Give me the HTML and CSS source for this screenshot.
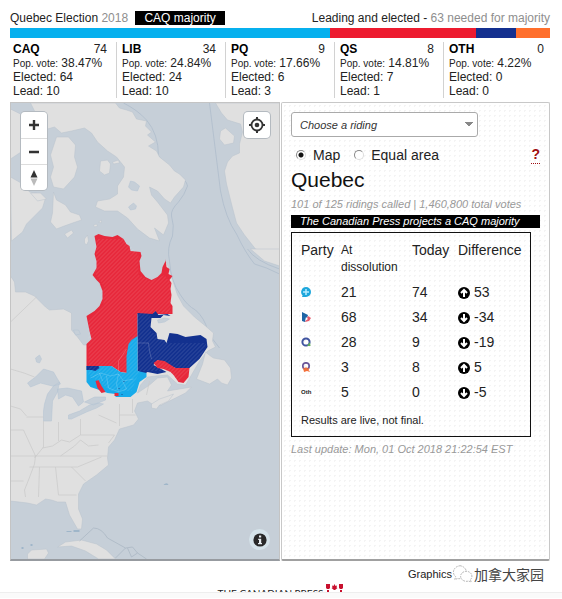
FILE: index.html
```html
<!DOCTYPE html>
<html lang="en">
<head>
<meta charset="utf-8">
<title>Quebec Election 2018</title>
<link rel="stylesheet" href="styles.css">
</head>
<body>
<div class="page">
  <header class="top">
    <div>Quebec Election <span class="muted">2018</span> <span class="tag">CAQ majority</span></div>
    <div class="leading">Leading and elected - <span class="muted">63 needed for majority</span></div>
  </header>
  <div class="bar"><span class="seg caq"></span><span class="seg lib"></span><span class="seg pq"></span><span class="seg qs"></span></div>
  <section class="parties">
    <div class="party"><div class="head"><b>CAQ</b><span>74</span></div><div><small>Pop. vote:</small> 38.47%</div><div>Elected: 64</div><div>Lead: 10</div></div>
    <div class="party"><div class="head"><b>LIB</b><span>34</span></div><div><small>Pop. vote:</small> 24.84%</div><div>Elected: 24</div><div>Lead: 10</div></div>
    <div class="party"><div class="head"><b>PQ</b><span>9</span></div><div><small>Pop. vote:</small> 17.66%</div><div>Elected: 6</div><div>Lead: 3</div></div>
    <div class="party"><div class="head"><b>QS</b><span>8</span></div><div><small>Pop. vote:</small> 14.81%</div><div>Elected: 7</div><div>Lead: 1</div></div>
    <div class="party"><div class="head"><b>OTH</b><span>0</span></div><div><small>Pop. vote:</small> 4.22%</div><div>Elected: 0</div><div>Lead: 0</div></div>
  </section>
  <main class="panels">
    <div class="map">
      <svg class="mapart" viewBox="11 104 269 456" preserveAspectRatio="xMidYMid slice" aria-hidden="true">
        <defs>
          <pattern id="hatch" width="4" height="4" patternUnits="userSpaceOnUse"><path d="M0 4L4 0" stroke="#fff" stroke-opacity=".2" stroke-width=".7"/></pattern>
        </defs>
        <path fill="#c6cfd8" d="M11 104h269v457H11z"/>
        <g fill="none" stroke="#aebccb" stroke-width=".8">
          <path d="M124 104q14 7 23 17 12 14 12 36 8 10 19 18 9 6 10 12-3 9-9 16-8 8-7 14 3 9 1 20-6 12-3 25 1 20 11 34 7 11 15 15 9 8 12 20 5 10 12 18"/>
          <path d="M210 104l11 88q5 27 16 43 9 19 18 30l12 4 13 6"/>
          <path d="M248 250q8 12 32 20"/>
        </g>
        <g fill="#e0e0e0" stroke="#b9c3cc" stroke-width=".5">
          <path d="M31 104L116 104 120 109 127 111 133 113 137 120 147 122 146 127 152 133 148 136 156 143 149 147 157 152 160 158 170 166 175 172 180 175 186 181 184 188 175 198 171 204 165 200 158 192 150 188 152 196 158 203 168 216 169 224 164 236 155 229 160 242 150 239 138 230 128 219 118 212 105 212 96 208 98 202 110 200 118 195 118 187 124 178 125 168 117 158 108 152 98 143 92 134 85 129 72 132 62 134 55 128 48 130 40 122z"/>
          <path d="M11 110L21 115 30 130 26 150 11 160z"/>
          <path d="M57 138h12l7 8-1 12 3 10-3 10-11 12-10-2-3-10 3-10-3-12z"/>
          <path d="M101 162l7-1 3 4-1 9-5 2-5-4z"/>
          <path d="M113 163l6-2 1 3-6 1z"/>
          <path d="M11 178l14 8 5 7 11 2 5 4-3 10-8 8-8 8-4 8-11 9z"/>
          <path d="M31 194h10l6 6-9 2z"/>
          <path d="M54 193l3 8 9 5 5 7 9 3 2 5-9 3-11 4-5 2-6-7 2-9z"/>
          <path d="M65 235l7-4 2 3-6 5zM85 240l3-4 1 6-2 4-2-2zM94 226l3-1 1 2-3 1zM99 223l3-2v3z"/>
          <path d="M216 104H280V261L268 254 256 250 245 236 237 224 232 205 227 185 225 172 228 163 233 157 240 154 240 145 243 133 241 125 228 121 222 114z"/>
          <path d="M221 132l5-3 9 8-1 7-9 2-5-6zM251 250h29v17l-15-5z"/>
          <path d="M11 277L15 283 16 293 26 293 35 297 46 308 50 311 64 310 72 314 72 331 78 338 84 346 90 346 93 335 88 318 100 310 104 295 97 278 100 240 138 256 141 275 152 282 162 274 167 263 171 275 175 287 178 296 184 307 195 318 206 327 214 334 213 342 216 348 208 352 200 362 192 376 186 386 178 385 168 376 156 377 148 378 141 386 138 394 150 386 158 379 168 378 172 386 168 392 180 390 192 388 186 394 176 399 162 406 154 406 148 402 138 404 135 412 139 420 134 426 120 430 115 441 109 448 108 459 109 466 97 476 84 485 79 495 79 510 83 520 82 530 78 530 70 516 66 503 58 503 52 501 46 500 37 506 28 504 11 502z"/>
          <path d="M197 380L203 365 206 353 211 357 214 359 225 361 231 369 232 379 228 386 222 384 218 380 210 385z"/>
          <path d="M152 405l8-5 9-3 5-2-5 7-9 4-3 4-5-1z"/>
          <path d="M28 555l4-4 15-1 2 4-4 6H28zM58 548l8-5 16-2 15 4 10 6 9 9H99l-13-8-14-5z"/>
        </g>
        <g fill="#c6cfd8" stroke="#b3c3d2" stroke-width=".5">
          <path d="M36 359l4-3 2 4-2 4-3-1zM28 384l8-6 8-8 10 3 4 7 3 5-8 2-12-3-10 4zM45 405l3-10 6-8 6-4-2 10-5 9-1 20-8 0 0-10zM58 390l10-1 14 3 2 11-5 4-6-9-7-2-7 4zM69 416l11-4 10-6 9-2 5 1-7 4-10 4-15 7-3 0zM85 403l10-5 11 0 0 3-12 5z"/>
          <path d="M131 182l4 1 5 4-2 5-6-1-3-3zM129 208l5-4 3 3-1 3-5 1zM74 331l5 0 2 4-5 1z"/>
          <path d="M158 321l7-2 5 1-5 3-6 1z"/>
        </g>
        <g fill="none" stroke="#c8c8c8" stroke-width=".7">
          <path d="M11 323l26-25M11 457h25M11 431h13l12 26-1 8-6 16-4 10 1 7M11 482h13M11 407l10 3 6 7M27 418h17M44 422v26l-9 11M59 423v19M81 420v16l-11 7-8-2-9 6-10 2M81 436h34l-6 8M61 457l14-10 6-6 8 6 10-1M35 457h73M30 468h48l24-10M40 468l-1 30M56 468l3 28h18M72 468l14 14M120 405v22M133 400v14M120 416h16M99 416l18 8M11 370q15 4 24 8M150 382l-3 14"/>
          <path d="M80 542l14-13q8 0 14 10l18 10 7-1 5 6-6 4-4-9M126 549l-10 10M138 554l9 6" stroke="#a8b5c2"/>
        </g>
        <g fill="#9fb6c9"><path d="M22 548h2v2h-2zM31 545h2v2h-2zM67 532h5v1h-5zM74 531h6v2h-6zM165 485q3-2 4 1h-5z"/></g>
        <path fill="#c6cfd8" d="M140 252L141 273 145 278 152 281 158 279 163 271 166 259 160 245 145 240z"/>
        <g>
          <path fill="#e7293c" d="M95 237L99 235 105 237 113 238 118 236 124 240 127 245 130 247 131 252 141 253 142 257 140 262 141 272 146 278 152 281 158 278 162 274 163 268 166 262 166 260 167 268 170 270 169 275 173 277 170 281 172 284 171 290 172 296 171 304 173 307 173 315H138V338L128 357 128 374 121 373 112 367H87V345L92 340 90 332 87 317 95 312 100 307 103 300 103 292 100 284 97 281 93 276 97 269 97 262 95 255 97 248z"/>
          <path fill="#13318f" d="M138 314L153 315 156 312 159 316 168 315 171 317 164 316 161 319 152 319 151 328 157 334 158 340 165 341 167 344 170 334 178 335 186 338 201 336 207 340 208 348 200 360 190 369 176 369 168 366 158 361 154 366 160 369 167 373 158 375 148 373 145 375 138 372z"/>
          <path fill="#18abea" d="M138 337V372L147 374 147 378 140 383 137 393 131 398H116V395L108 394 97 390 91 388 87 383V367H112L121 373 127 374 127 357 129 345 132 341z"/>
          <path fill="#13318f" d="M87 367L99 367 100 369 96 372 92 371 87 371z"/>
          <path fill="#e7293c" d="M96 382L99 381 102 387 106 393 102 394 98 389zM154 364L158 361 165 362 176 369H190L189 378 184 384 179 383 174 376 171 373 164 370 158 369zM115 394h4v3h-4z"/>
          <path fill="none" stroke="#fff" stroke-opacity=".3" stroke-width=".6" d="M127 350l-8 12v10M138 344h11l1 8 2 8M91 379l10-5 10 3 8-2 5 7 10-2M107 377l2 12 10 4 8-3-4-8M119 375l-2 10 2 8M100 374l3 8"/>
          <path fill="#1b4f96" d="M119 389h1v1h-1zM122 395h1v1h-1zM124 382h1v1h-1z"/>
        </g>
        <path fill="url(#hatch)" d="M97 240h28l14 16v20l12 6 14-6 6 8v30h-20v18l18 12h38l-8 20-12 10-8 8-16-10h-23l-8 20h-20l-23-16V320l15-13v-20l-8-12z"/>
      </svg>
      <div class="zoomer">
        <button aria-label="Zoom in"><svg viewBox="0 0 12 12"><path d="M6 1v10M1 6h10" stroke="#333" stroke-width="2.4"/></svg></button>
        <button aria-label="Zoom out"><svg viewBox="0 0 12 12"><path d="M1 6h10" stroke="#333" stroke-width="2.4"/></svg></button>
        <button aria-label="Reset north"><svg class="compass" viewBox="0 0 8 16"><path d="M4 0l3.500 7.500h-7z" fill="#333"/><path d="M4 16l3.500-7.500h-7z" fill="#bbb"/></svg></button>
      </div>
      <button class="locate" aria-label="Find my location"><svg viewBox="0 0 16 16"><circle cx="8" cy="8" r="5.500" fill="none" stroke="#333" stroke-width="1.800"/><circle cx="8" cy="8" r="2.300" fill="#333"/><path d="M8 0v3M8 13v3M0 8h3M13 8h3" stroke="#333" stroke-width="2"/></svg></button>
      <button class="info" aria-label="Map information"><svg viewBox="0 0 14 14"><circle cx="7" cy="7" r="6.600" fill="#292929"/><path d="M6 2.500h2.200v2H6zM5.200 5.800h3v4.200h.8v1.300H5V10h1V7h-.8z" fill="#e8eef2"/></svg></button>
    </div>
    <aside class="results">
      <select aria-label="Riding"><option>Choose a riding</option></select>
      <div class="modes">
        <label><input type="radio" name="mode" checked>Map</label>
        <label><input type="radio" name="mode">Equal area</label>
        <a class="help" href="#">?</a>
      </div>
      <h1>Quebec</h1>
      <p class="note">101 of 125 ridings called | 1,460,800 total votes</p>
      <p class="call">The Canadian Press projects a CAQ majority</p>
      <div class="box">
        <table>
          <thead><tr><th>Party</th><th class="dis">At dissolution</th><th>Today</th><th>Difference</th></tr></thead>
          <tbody>
            <tr><td><svg class="logo" viewBox="0 0 10 10" role="img" aria-label="CAQ"><path d="M5 0a5 5 0 1 1 0 10H1l.6-1.500A5 5 0 0 1 5 0z" fill="#1ea7dc"/><path d="M5 2v6M2 5h6" stroke="#b8ecff" stroke-width="1.500"/></svg></td><td>21</td><td>74</td><td><svg class="arrow" viewBox="0 0 12 12"><circle cx="6" cy="6" r="6"/><path d="M6 10V3M3 6l3-3 3 3"/></svg>53</td></tr>
            <tr><td><svg class="logo" viewBox="0 0 10 10" role="img" aria-label="LIB"><path d="M1 0l6 3-1 3-2 4-3-1z" fill="#1f65a5"/><path d="M7 4l3 2-2 3-4 1z" fill="#e55a6b"/><path d="M5 5l2 2-3 2" fill="#fff"/></svg></td><td>68</td><td>34</td><td><svg class="arrow" viewBox="0 0 12 12"><circle cx="6" cy="6" r="6"/><path d="M6 2v7M3 6l3 3 3-3"/></svg>-34</td></tr>
            <tr><td><svg class="logo" viewBox="0 0 10 10" role="img" aria-label="PQ"><circle cx="5" cy="5" r="3.600" fill="none" stroke="#4054a0" stroke-width="2"/><path d="M6 9l3-4 .5 4z" fill="#62ad5a"/></svg></td><td>28</td><td>9</td><td><svg class="arrow" viewBox="0 0 12 12"><circle cx="6" cy="6" r="6"/><path d="M6 2v7M3 6l3 3 3-3"/></svg>-19</td></tr>
            <tr><td><svg class="logo" viewBox="0 0 10 10" role="img" aria-label="QS"><circle cx="5" cy="4" r="3.200" fill="none" stroke="#6b5799" stroke-width="1.700"/><path d="M2 5.500l2 1 1-2 1 2 2.500-.5-1 2 1.500 2-3-1-3 1z" fill="#f3703a"/></svg></td><td>3</td><td>8</td><td><svg class="arrow" viewBox="0 0 12 12"><circle cx="6" cy="6" r="6"/><path d="M6 10V3M3 6l3-3 3 3"/></svg>5</td></tr>
            <tr><td class="oth">Oth</td><td>5</td><td>0</td><td><svg class="arrow" viewBox="0 0 12 12"><circle cx="6" cy="6" r="6"/><path d="M6 2v7M3 6l3 3 3-3"/></svg>-5</td></tr>
          </tbody>
        </table>
        <p class="live">Results are live, not final.</p>
      </div>
      <p class="note">Last update: Mon, 01 Oct 2018 21:22:54 EST</p>
    </aside>
  </main>
  <footer>
    <div class="credit"><span>Graphics</span><svg viewBox="0 0 24 20" aria-hidden="true"><g fill="#fff" stroke="#999" stroke-width=".8" stroke-dasharray="2 1"><path d="M9 1a8 7 0 0 0-5 12l-1 3 3-1a8 7 0 1 0 3-14z"/><path d="M16 7a6.500 5.500 0 1 0 2 10.700l3 1-1-2.500A6.500 5.500 0 0 0 16 7z"/></g></svg><span class="mark" lang="zh">加拿大家园</span></div>
    <div class="press"><span>THE CANADIAN PRESS</span><svg viewBox="0 0 17 8" aria-hidden="true"><path fill="#c8102e" d="M0 0h4v4l-1 1H1L0 4zM1 6h2v2H1zM13 0h4v4l-1 1h-2l-1-1zM14 6h2v2h-2zM8.500 0l1 2 1.500-.5-.5 2 1 .5-2.500 2h-1L5.500 4l1-.5-.5-2 1.500.5z"/></svg></div>
    <div class="strip"></div>
  </footer>
</div>
</body>
</html>
```
FILE: styles.css
```css
* { box-sizing: border-box; }
body { margin: 0; background: #fff; color: #222; font: 12px/14px "Liberation Sans", Arial, sans-serif; }
p, h1 { margin: 0; }
button { border: 0; padding: 0; background: #fff; display: flex; align-items: center; justify-content: center; }
.page { padding: 11px 12px 0 10px; }
.top { display: flex; justify-content: space-between; height: 17px; }
.muted { color: #8e8e8e; }
.tag { background: #000; color: #fff; padding: 0 9px; margin-left: 4px; }
.bar { display: flex; height: 10px; }
.seg { height: 100%; }
.caq { background: #06b0ee; flex: 320; }
.lib { background: #ed1b2f; flex: 146; }
.pq { background: #14308f; flex: 40; }
.qs { background: #ff6f2c; flex: 34; }
.parties { display: grid; grid-template-columns: 106fr 109fr 109fr 109fr 107fr; padding: 4px 0; }
.party { border-left: 1px solid #d2d2d2; padding: 0 9px 0 5px; }
.party:first-child { border-left: 0; padding-left: 3px; }
.party:last-child { padding-right: 6px; }
.party > div { height: 14px; }
.head { display: flex; justify-content: space-between; }
.party b { color: #000; }
.party small { font-size: 10px; }
.panels { display: grid; grid-template-columns: 271fr 269fr; height: 459px; }
.map { position: relative; border: 1px solid #c4c4c4; border-bottom: 2px solid #979ba0; margin-right: 1px; overflow: hidden; min-height: 0; }
.mapart { display: block; width: 100%; height: 100%; }
.zoomer { position: absolute; left: 10px; top: 9px; width: 26px; border-radius: 4px; overflow: hidden; box-shadow: 0 0 0 1px #b4bac0; }
.zoomer button { width: 26px; height: 26px; }
.zoomer button + button { border-top: 1px solid #ddd; }
.zoomer svg { width: 12px; height: 12px; }
.zoomer .compass { width: 8px; height: 16px; }
.locate { position: absolute; right: 9px; top: 9px; width: 26px; height: 26px; border-radius: 4px; box-shadow: 0 0 0 1px #b4bac0; }
.locate svg { width: 16px; height: 16px; }
.info { position: absolute; right: 9px; bottom: 9px; width: 21px; height: 21px; border-radius: 50%; background: #d5e3ea; }
.info svg { width: 14px; height: 14px; }
.results { border: 1px solid #c8c8c8; border-bottom: 2px solid #a0a0a0; border-radius: 2px; padding: 9px 9px 0; background: radial-gradient(#f4f4f4 1px, transparent 1px) 0 0 / 5px 5px #fff; }
select { display: block; appearance: none; width: 75%; height: 25px; border: 1px solid #aaa; border-radius: 3px; padding: 0 8px; font: italic 11px "Liberation Sans", Arial, sans-serif; color: #333; background: linear-gradient(to bottom right, #888 50%, transparent 50%) right 4px center / 4px 5px no-repeat, linear-gradient(to bottom left, #888 50%, transparent 50%) right 8px center / 4px 5px no-repeat, #fff; }
.modes { display: flex; gap: 14px; font-size: 14px; line-height: 18px; margin-top: 8px; padding-left: 5px; }
.modes label { display: flex; align-items: center; gap: 7px; }
.modes input { appearance: none; margin: 0; width: 10px; height: 10px; border: 1px solid #888; border-right-color: #ddd; border-bottom-color: #ddd; border-radius: 50%; background: #fff; }
.modes input:checked { background: radial-gradient(circle, #111 2px, #fff 3px); }
.help { margin-left: auto; color: #a00d12; font-weight: bold; text-decoration: none; border-bottom: 1px dotted #a00d12; }
h1 { font-size: 21px; line-height: 24px; font-weight: normal; color: #111; margin-top: 4px; }
.note { font-size: 11px; line-height: 16px; font-style: italic; color: #999; margin-top: 4px; }
.call { background: #000; color: #fff; font-size: 11px; line-height: 13px; font-style: italic; padding-left: 9px; margin-top: 3px; }
.box { border: 1px solid #111; margin: 4px 9px 0 0; padding: 9px 9px 8px; }
table { width: 100%; border-collapse: collapse; table-layout: fixed; font-size: 14px; }
th, td { padding: 0; text-align: left; font-weight: normal; line-height: 17px; vertical-align: top; }
th:nth-child(1) { width: 40px; }
th:nth-child(2) { width: 71px; }
th:nth-child(3) { width: 46px; }
th.dis { font-size: 12px; padding-right: 8px; }
td { height: 25px; line-height: 25px; }
tbody tr:first-child td { padding-top: 4px; }
.logo { width: 10px; height: 10px; }
.oth { font-size: 6px; font-weight: bold; }
.arrow { width: 12px; height: 12px; vertical-align: -2px; margin-right: 4px; }
.arrow path { fill: none; stroke: #fff; stroke-width: 2; }
.live { font-size: 11px; line-height: 16px; margin-top: 7px; }
footer { padding-top: 3px; }
.credit { display: flex; align-items: center; justify-content: flex-end; padding-right: 6px; height: 20px; font-size: 11px; }
.credit svg { width: 22px; height: 20px; }
.mark { font: 14px/20px "Noto Sans CJK SC", sans-serif; color: #444; }
.press { display: flex; justify-content: center; height: 8px; overflow: hidden; font: 10px/12px Lato, sans-serif; }
.press span { padding-top: 3px; }
.press svg { width: 17px; height: 8px; margin-left: 2px; }
.strip { height: 6px; margin: 0 -12px 0 -10px; background: #fafafa; border-top: 1px solid #eee; }
```
